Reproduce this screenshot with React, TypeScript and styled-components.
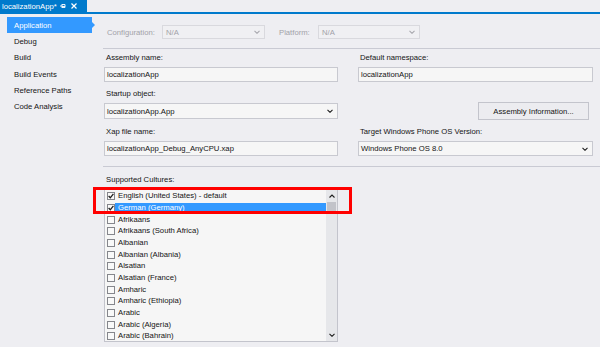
import React from "react";
import styled, { createGlobalStyle } from "styled-components";

const GlobalStyle = createGlobalStyle`
  html, body {
    margin: 0;
    padding: 0;
    background: #eeeef2;
  }
  body {
    font-family: "Liberation Sans", Arial, sans-serif;
    font-size: 7.7px;
    color: #141414;
  }
`;

const Page = styled.div`
  width: 600px;
  height: 347px;
  overflow: hidden;
  background: #eeeef2;
  display: flex;
  flex-direction: column;
`;

/* document tab strip */
const TabStrip = styled.div`
  height: 12px;
  display: flex;
  border-bottom: 2px solid #007acc;
`;

const DocTab = styled.div`
  width: 87px;
  height: 12px;
  background: #007acc;
  color: #ffffff;
  display: flex;
  align-items: center;
  padding-left: 2px;
  box-sizing: border-box;
  gap: 3px;
  white-space: nowrap;
`;

const TabIcons = styled.span`
  display: flex;
  align-items: center;
  gap: 5px;
`;

const Body = styled.div`
  flex: 1;
  display: flex;
`;

/* left navigation */
const Nav = styled.div`
  width: 98px;
  flex-shrink: 0;
  padding-top: 3px;
  display: flex;
  flex-direction: column;
`;

const NavItem = styled.div<{ $active?: boolean }>`
  position: relative;
  height: 16.3px;
  width: 85px;
  margin-left: 7px;
  padding-left: 7px;
  box-sizing: border-box;
  display: flex;
  align-items: center;
  background: ${(p) => (p.$active ? "#3399ff" : "transparent")};
  color: ${(p) => (p.$active ? "#ffffff" : "#141414")};

  &::after {
    content: "";
    display: ${(p) => (p.$active ? "block" : "none")};
    position: absolute;
    right: -3px;
    top: 5px;
    border-left: 3px solid #3399ff;
    border-top: 3px solid transparent;
    border-bottom: 3px solid transparent;
  }
`;

/* main property page */
const Main = styled.div`
  flex: 1;
  padding-top: 11px;
  padding-left: 5px;
  display: flex;
  flex-direction: column;
`;

const ConfigBar = styled.div`
  height: 14px;
  display: flex;
  align-items: center;
  padding-left: 4px;
`;

const ConfigLabel = styled.span<{ $w: number; $ml?: number }>`
  width: ${(p) => p.$w}px;
  margin-left: ${(p) => p.$ml ?? 0}px;
  color: #a2a2a8;
`;

const DisabledSelect = styled.div<{ $w: number }>`
  width: ${(p) => p.$w}px;
  height: 14px;
  box-sizing: border-box;
  border: 1px solid #d9d9de;
  background: #f0f0f3;
  color: #a2a2a8;
  display: flex;
  align-items: center;
  justify-content: space-between;
  padding: 0 4px 0 3px;
`;

const Separator = styled.div<{ $mt: number }>`
  height: 1px;
  margin-top: ${(p) => p.$mt}px;
  background: #c9cad3;
`;

const FieldGrid = styled.div`
  display: grid;
  grid-template-columns: 234px 235px;
  column-gap: 20px;
  row-gap: 6px;
  margin-top: 3px;
  margin-left: 1px;
`;

const Field = styled.div`
  display: flex;
  flex-direction: column;
`;

const Label = styled.div`
  height: 12px;
  line-height: 12px;
  padding-left: 2px;
  margin-bottom: 3px;
  white-space: nowrap;
`;

const TextBox = styled.div<{ $h?: number }>`
  height: ${(p) => p.$h ?? 15}px;
  box-sizing: border-box;
  border: 1px solid #c8c9d0;
  background: #f6f6f6;
  display: flex;
  align-items: center;
  justify-content: space-between;
  padding: 0 4px 0 2px;
  white-space: nowrap;
`;

const ButtonCell = styled.div`
  display: flex;
  justify-content: flex-end;
  padding-top: 14px;
  padding-right: 4px;
`;

const Button = styled.div`
  width: 111px;
  height: 18px;
  box-sizing: border-box;
  border: 1px solid #c3c4cc;
  background: #ececf0;
  display: flex;
  align-items: center;
  justify-content: center;
`;

const Cultures = styled.div`
  margin-top: 7px;
  margin-left: 1px;
  display: flex;
  flex-direction: column;
`;

const ListWrap = styled.div`
  position: relative;
  width: 234px;
  height: 153px;
`;

const ListBox = styled.div`
  width: 100%;
  height: 100%;
  box-sizing: border-box;
  border: 1px solid #c3c4cc;
  background: #f6f6f6;
  display: flex;
  overflow: hidden;
`;

const Items = styled.div`
  flex: 1;
  padding-top: 0.5px;
  display: flex;
  flex-direction: column;
`;

const Row = styled.div`
  height: 11.67px;
  flex-shrink: 0;
  display: flex;
  align-items: center;
  padding-left: 2px;
`;

const Check = styled.div`
  width: 8px;
  height: 8px;
  box-sizing: border-box;
  border: 1px solid #85868c;
  background: #f9f9f9;
  display: flex;
  align-items: center;
  justify-content: center;
  flex-shrink: 0;
`;

const ItemLabel = styled.div<{ $selected?: boolean }>`
  flex: 1;
  height: 10px;
  line-height: 10px;
  padding-left: 3px;
  white-space: nowrap;
  background: ${(p) => (p.$selected ? "#3399ff" : "transparent")};
  color: ${(p) => (p.$selected ? "#ffffff" : "#141414")};
`;

const ScrollBar = styled.div`
  width: 11px;
  background: #e6e7ea;
  display: flex;
  flex-direction: column;
  align-items: center;
`;

const ScrollArrow = styled.div`
  height: 12px;
  display: flex;
  align-items: center;
  justify-content: center;
`;

const Thumb = styled.div`
  width: 9px;
  height: 12px;
  background: #c2c3c9;
`;

const Track = styled.div`
  flex: 1;
`;

const Highlight = styled.div`
  position: absolute;
  left: -11px;
  top: -2px;
  width: 259px;
  height: 27px;
  box-sizing: border-box;
  border: 3px solid #ff0000;
  pointer-events: none;
`;

const Chevron = ({ color = "#1e1e1e", up = false }: { color?: string; up?: boolean }) => (
  <svg width="6" height="4" viewBox="0 0 6 4">
    <path
      d={up ? "M0.5 3.5 L3 1 L5.5 3.5" : "M0.5 0.8 L3 3.3 L5.5 0.8"}
      fill="none"
      stroke={color}
      strokeWidth="1.1"
    />
  </svg>
);

const Tick = () => (
  <svg width="6" height="6" viewBox="0 0 6 6">
    <path d="M0.6 3 L2.3 4.8 L5.4 0.8" fill="none" stroke="#1e1e1e" strokeWidth="1.3" />
  </svg>
);

const PinIcon = () => (
  <svg width="6" height="6" viewBox="0 0 6 6">
    <path d="M0 3 H2 M2 1 V5 M2 1.5 H5 V4.5 H2 M2 3.5 H5" fill="none" stroke="#ffffff" strokeWidth="0.9" />
  </svg>
);

const CloseIcon = () => (
  <svg width="6" height="6" viewBox="0 0 6 6">
    <path d="M0.5 0.5 L5.5 5.5 M5.5 0.5 L0.5 5.5" stroke="#ffffff" strokeWidth="1.2" />
  </svg>
);

const navItems = ["Application", "Debug", "Build", "Build Events", "Reference Paths", "Code Analysis"];

const cultures = [
  { name: "English (United States) - default", checked: true },
  { name: "German (Germany)", checked: true, selected: true },
  { name: "Afrikaans" },
  { name: "Afrikaans (South Africa)" },
  { name: "Albanian" },
  { name: "Albanian (Albania)" },
  { name: "Alsatian" },
  { name: "Alsatian (France)" },
  { name: "Amharic" },
  { name: "Amharic (Ethiopia)" },
  { name: "Arabic" },
  { name: "Arabic (Algeria)" },
  { name: "Arabic (Bahrain)" },
];

const App: React.FC = () => {
  return (
    <Page>
      <GlobalStyle />
      <TabStrip>
        <DocTab>
          localizationApp*
          <TabIcons>
            <PinIcon />
            <CloseIcon />
          </TabIcons>
        </DocTab>
      </TabStrip>
      <Body>
        <Nav>
          {navItems.map((item, i) => (
            <NavItem key={item} $active={i === 0}>
              {item}
            </NavItem>
          ))}
        </Nav>
        <Main>
          <ConfigBar>
            <ConfigLabel $w={55}>Configuration:</ConfigLabel>
            <DisabledSelect $w={103}>
              N/A
              <Chevron color="#a8a8ae" />
            </DisabledSelect>
            <ConfigLabel $w={39} $ml={14}>
              Platform:
            </ConfigLabel>
            <DisabledSelect $w={102}>
              N/A
              <Chevron color="#a8a8ae" />
            </DisabledSelect>
          </ConfigBar>
          <Separator $mt={9} />
          <FieldGrid>
            <Field>
              <Label>Assembly name:</Label>
              <TextBox>localizationApp</TextBox>
            </Field>
            <Field>
              <Label>Default namespace:</Label>
              <TextBox>localizationApp</TextBox>
            </Field>
            <Field>
              <Label>Startup object:</Label>
              <TextBox $h={16}>
                localizationApp.App
                <Chevron />
              </TextBox>
            </Field>
            <ButtonCell>
              <Button>Assembly Information...</Button>
            </ButtonCell>
            <Field>
              <Label>Xap file name:</Label>
              <TextBox>localizationApp_Debug_AnyCPU.xap</TextBox>
            </Field>
            <Field>
              <Label>Target Windows Phone OS Version:</Label>
              <TextBox>
                Windows Phone OS 8.0
                <Chevron />
              </TextBox>
            </Field>
          </FieldGrid>
          <Separator $mt={10} />
          <Cultures>
            <Label>Supported Cultures:</Label>
            <ListWrap>
              <ListBox>
                <Items>
                  {cultures.map((c) => (
                    <Row key={c.name}>
                      <Check>{c.checked && <Tick />}</Check>
                      <ItemLabel $selected={c.selected}>{c.name}</ItemLabel>
                    </Row>
                  ))}
                </Items>
                <ScrollBar>
                  <ScrollArrow>
                    <Chevron up />
                  </ScrollArrow>
                  <Thumb />
                  <Track />
                  <ScrollArrow>
                    <Chevron />
                  </ScrollArrow>
                </ScrollBar>
              </ListBox>
              <Highlight />
            </ListWrap>
          </Cultures>
        </Main>
      </Body>
    </Page>
  );
};

export default App;
